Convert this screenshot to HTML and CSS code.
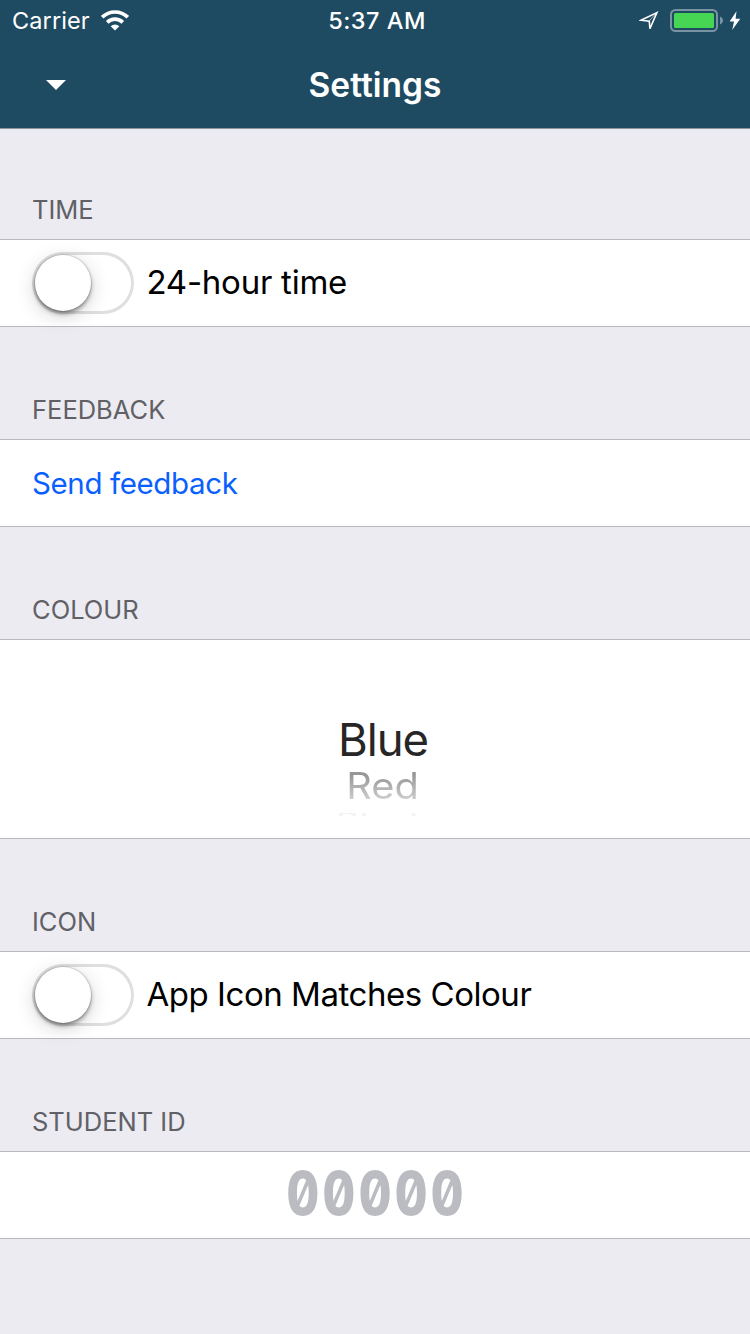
FILE: index.html
```html
<!DOCTYPE html>
<html lang="en">
<head>
<meta charset="utf-8">
<title>Settings</title>
<link rel="stylesheet" href="styles.css">
</head>
<body>
<header class="header">
  <div class="status">
    <div class="status-left">
      <span class="carrier">Carrier</span>
      <svg class="wifi" width="28" height="21" viewBox="0 0 28 21">
        <path d="M1.2 7.2A18.3 18.3 0 0 1 26.8 7.2" fill="none" stroke="#fff" stroke-width="3.7"/>
        <path d="M6.2 12.3A11.3 11.3 0 0 1 21.8 12.3" fill="none" stroke="#fff" stroke-width="3.7"/>
        <path d="M9.7 16.2A6.3 6.3 0 0 1 18.3 16.2L14 20.5Z" fill="#fff"/>
      </svg>
    </div>
    <span class="clock">5:37 AM</span>
    <div class="status-right">
      <svg class="location" width="20" height="20" viewBox="0 0 20 20"><path d="M17.9 1.6L2 9.2L10.3 10.2L10.9 17.8Z" fill="none" stroke="#fff" stroke-width="1.6"/><path d="M17.4 1.8L10.1 10.1" stroke="#fff" stroke-width=".6"/></svg>
      <svg class="battery" width="53" height="23" viewBox="0 0 53 23">
        <rect x="1" y="1" width="46" height="21" rx="4.5" fill="none" stroke="#7893a1" stroke-width="2"/>
        <rect x="4" y="4" width="40" height="15" rx="1.5" fill="#46d654"/>
        <path d="M50 7.5C54 9 54 14 50 15.5Z" fill="#7893a1"/>
      </svg>
      <svg class="bolt" width="12" height="20" viewBox="0 0 12 20"><path d="M7.5 .3L.6 10.6H5L3.2 19L11.3 7.8H6.6Z" fill="#fff"/></svg>
    </div>
  </div>
  <div class="nav">
    <svg class="caret" width="20" height="10" viewBox="0 0 20 10"><path d="M0 0H20L10 10Z" fill="#fff"/></svg>
    <h1 class="title">Settings</h1>
  </div>
</header>
<main>
  <h2 class="section first">TIME</h2>
  <div class="cell"><span class="switch"><span class="knob"></span></span><span class="label">24-hour time</span></div>
  <h2 class="section">FEEDBACK</h2>
  <div class="cell"><a class="link">Send feedback</a></div>
  <h2 class="section">COLOUR</h2>
  <div class="cell picker">
    <div class="option selected">Blue</div>
    <div class="option near"><span>Red</span></div>
    <div class="option far"><span>Black</span></div>
  </div>
  <h2 class="section">ICON</h2>
  <div class="cell"><span class="switch"><span class="knob"></span></span><span class="label label-tight">App Icon Matches Colour</span></div>
  <h2 class="section">STUDENT ID</h2>
  <div class="cell id-cell"><span class="student-id">00000</span></div>
</main>
</body>
</html>
```
FILE: styles.css
```css
* { box-sizing: border-box; }
body { margin: 0; height: 1334px; overflow: hidden; background: #ebebf1; font-family: Inter, "Liberation Sans", sans-serif; color: #000; }
.header { height: 129px; background: #1f4b62; border-bottom: 1px solid #8e949b; color: #fff; }
.status { height: 40px; display: grid; grid-template-columns: 1fr auto 1fr; align-items: center; padding: 0 10px 0 12px; }
.status-left, .status-right { display: flex; align-items: center; }
.status-right { justify-content: flex-end; }
.carrier { font-size: 23.5px; line-height: 40px; letter-spacing: .1px; margin-top: 1px; }
.wifi { margin-left: 11.5px; }
.clock { font-size: 23.5px; font-weight: 500; line-height: 40px; letter-spacing: .5px; margin: 1px -1px 0 1px; }
.battery { margin-left: 11px; }
.bolt { margin-left: 6px; margin-right: -1px; }
.nav { height: 88px; display: grid; grid-template-columns: 1fr auto 1fr; align-items: center; }
.caret { margin-left: 46px; }
.title { margin: 0; padding-top: 1px; font-size: 33.5px; font-weight: 600; line-height: 88px; }
.section { margin: 0; height: 112px; padding: 66px 32px 0; font-size: 25.5px; line-height: 34px; font-weight: 400; color: #606066; }
.first { height: 110px; padding-top: 64px; }
.cell { height: 88px; display: flex; align-items: center; padding: 0 32px; background: #fff; border-top: 1px solid #b9b9be; border-bottom: 1px solid #b9b9be; }
.switch { width: 102px; height: 62px; padding: 3px; border-radius: 31px; box-shadow: inset 0 0 0 3px #dfdfdf; }
.knob { display: block; width: 56px; height: 56px; border-radius: 50%; background: #fff; box-shadow: 0 0 1px 1px rgba(0,0,0,.12), 0 3px 4px rgba(0,0,0,.36), 0 5px 20px rgba(0,0,0,.18); }
.label { margin-left: 12.5px; padding-bottom: 2px; font-size: 33px; line-height: 44px; letter-spacing: -.25px; }
.label-tight { letter-spacing: -.46px; }
.link { font-size: 29.5px; line-height: 40px; letter-spacing: -.38px; color: #0a60ff; }
.picker { height: 200px; padding: 73px 0 0 17px; flex-direction: column; align-items: center; justify-content: flex-start; overflow: hidden; }
.option { flex: none; }
.selected { font-size: 45.5px; line-height: 54px; letter-spacing: -1.1px; margin-left: -1px; color: #262626; }
.near { height: 38px; line-height: 38px; font-size: 39px; margin-left: -1px; }
.near span { display: block; transform: scale(1.02, .94); color: transparent; background: linear-gradient(#969696 20%, #d0d0d0 90%); background-clip: text; -webkit-background-clip: text; }
.far { height: 3px; margin: 8px 0 0 -2px; line-height: 22px; font-size: 36px; overflow: hidden; color: #f3f3f3; }
.far span { display: block; }
.id-cell { justify-content: center; }
.student-id { font-size: 61px; line-height: 82px; padding-bottom: 4px; font-weight: 800; letter-spacing: 4.1px; margin-right: -4.1px; font-feature-settings: "zero" 1, "tnum" 1; color: #bbbbc2; transform: scaleX(.83); }
```
